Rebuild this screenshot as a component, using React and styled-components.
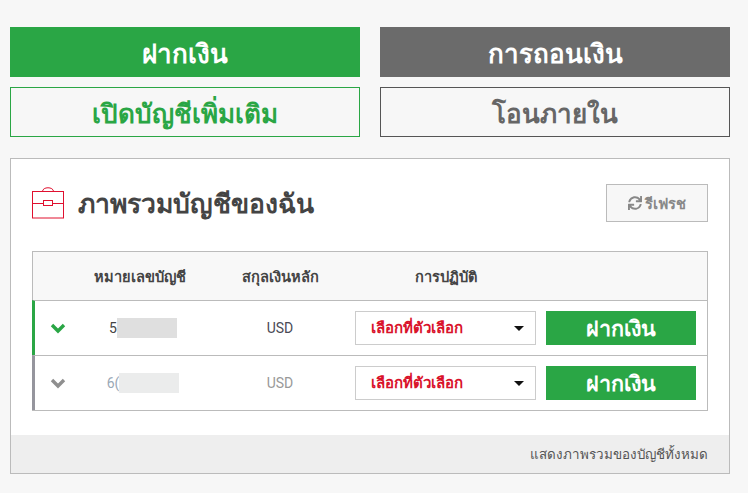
import React from 'react';
import styled, { createGlobalStyle } from 'styled-components';
import { FaSync } from 'react-icons/fa';

const GlobalStyle = createGlobalStyle`
  html, body { margin: 0; padding: 0; background: #f7f7f7; }
  * { box-sizing: border-box; }
  body { font-family: Roboto, "Noto Sans", "Liberation Sans", sans-serif; color: #444; }
`;

const Page = styled.div`
  width: 748px;
  height: 493px;
  padding: 27px 18px 0 10px;
  overflow: hidden;
`;

const ActionGrid = styled.div`
  display: grid;
  grid-template-columns: 350px 350px;
  column-gap: 20px;
  row-gap: 10px;
`;

const BigButton = styled.div`
  height: 50px;
  padding-top: 2px;
  display: flex;
  align-items: center;
  justify-content: center;
  font-size: 26px;
  font-weight: 700;
  color: ${p => p.$color};
  background: ${p => p.$bg || 'transparent'};
  border: 1px solid ${p => p.$border || p.$bg};
`;

const Panel = styled.div`
  margin-top: 21px;
  width: 720px;
  height: 316px;
  background: #fff;
  border: 1px solid #bbb;
  display: flex;
  flex-direction: column;
`;

const PanelBody = styled.div`
  flex: 1;
  padding: 25px 21px 0 21px;
`;

const PanelHead = styled.div`
  display: flex;
  align-items: center;
  height: 38px;
`;

const PanelTitle = styled.div`
  margin-left: 14px;
  padding-top: 2px;
  font-size: 26.5px;
  font-weight: 700;
  color: #444;
`;

const Refresh = styled.div`
  margin-left: auto;
  width: 102px;
  height: 38px;
  display: flex;
  align-items: center;
  justify-content: center;
  gap: 3px;
  background: #f7f7f7;
  border: 1px solid #bbb;
  color: #888;
  font-size: 14.7px;
  font-weight: 700;
`;

const Table = styled.div`
  margin-top: 29px;
  border: 1px solid #bbb;
`;

const HeadRow = styled.div`
  height: 48px;
  display: flex;
  align-items: center;
  background: #f8f8f8;
  font-size: 14.6px;
  font-weight: 700;
  color: #444;
`;

const Row = styled.div`
  height: 55px;
  display: flex;
  align-items: center;
  border-top: 1px solid #bbb;
  border-left: 3px solid ${p => p.$accent};
  margin-left: -1px;
  font-size: 14px;
  color: ${p => p.$muted ? '#999' : '#4a4a55'};
`;

const ChevronCell = styled.div`
  width: ${p => p.$head ? '48px' : '46px'};
  display: flex;
  justify-content: center;
`;

const AccountCell = styled.div`
  width: 124px;
  display: flex;
  align-items: center;
  justify-content: center;
  padding-right: ${p => p.$head ? '6px' : '0'};
`;

const AccountPrefix = styled.span`
  color: ${p => p.$muted ? '#9aa8b6' : '#444'};
`;

const Masked = styled.span`
  display: inline-block;
  width: 60px;
  height: 20px;
  background: ${p => p.$muted ? '#ebecec' : '#dfdfdf'};
`;

const CurrencyCell = styled.div`
  width: 150px;
  text-align: center;
`;

const ActionCell = styled.div`
  width: 181px;
  text-align: center;
`;

const Select = styled.div`
  width: 181px;
  height: 34px;
  display: flex;
  align-items: center;
  justify-content: space-between;
  padding: 0 11px 0 15px;
  border: 1px solid #ccc;
  background: #fff;
  color: #d9122b;
  font-size: 15px;
  font-weight: 700;
`;

const Caret = styled.span`
  width: 0;
  height: 0;
  border-left: 5px solid transparent;
  border-right: 5px solid transparent;
  border-top: 5px solid #111;
`;

const RowDeposit = styled.div`
  width: 150px;
  height: 34px;
  margin-left: 10px;
  display: flex;
  align-items: center;
  justify-content: center;
  background: #2aa645;
  color: #fff;
  font-size: 21.5px;
  font-weight: 700;
`;

const PanelFoot = styled.div`
  height: 38px;
  background: #eee;
  display: flex;
  align-items: center;
  justify-content: flex-end;
  padding-right: 21px;
  font-size: 13.4px;
  color: #555;
`;

const Chevron = ({ color }) => (
  <svg width="16" height="12" viewBox="0 0 16 12">
    <path d="M2 3 L8 9 L14 3" fill="none" stroke={color} strokeWidth="3.4" />
  </svg>
);

const Briefcase = () => (
  <svg width="32" height="32" viewBox="0 0 32 32" fill="none" stroke="#e0102f" strokeWidth="1">
    <rect x="0.5" y="4.5" width="31" height="26.5" />
    <path d="M10.5 4.5 C10.5 -0.5 21.5 -0.5 21.5 4.5" />
    <path d="M0.5 16.5 H11 M21 16.5 H31.5" />
    <rect x="11.5" y="13.5" width="9" height="5" />
  </svg>
);

const accounts = [
  { id: '5', accent: '#2aa645', chevron: '#2aa645' },
  { id: '6(', accent: '#95959d', chevron: '#8f8f8f', muted: true },
];

export default function App() {
  return (
    <Page>
      <GlobalStyle />
      <ActionGrid>
        <BigButton $bg="#2aa645" $color="#fff">ฝากเงิน</BigButton>
        <BigButton $bg="#6b6b6b" $color="#fff">การถอนเงิน</BigButton>
        <BigButton $border="#2aa645" $color="#2aa645">เปิดบัญชีเพิ่มเติม</BigButton>
        <BigButton $border="#555" $color="#666">โอนภายใน</BigButton>
      </ActionGrid>
      <Panel>
        <PanelBody>
          <PanelHead>
            <Briefcase />
            <PanelTitle>ภาพรวมบัญชีของฉัน</PanelTitle>
            <Refresh><FaSync size={14} color="#888" />รีเฟรช</Refresh>
          </PanelHead>
          <Table>
            <HeadRow>
              <ChevronCell $head />
              <AccountCell $head>หมายเลขบัญชี</AccountCell>
              <CurrencyCell>สกุลเงินหลัก</CurrencyCell>
              <ActionCell>การปฏิบัติ</ActionCell>
            </HeadRow>
            {accounts.map(a => (
              <Row key={a.id} $accent={a.accent} $muted={a.muted}>
                <ChevronCell><Chevron color={a.chevron} /></ChevronCell>
                <AccountCell>
                  <AccountPrefix $muted={a.muted}>{a.id}</AccountPrefix>
                  <Masked $muted={a.muted} />
                </AccountCell>
                <CurrencyCell>USD</CurrencyCell>
                <Select>เลือกที่ตัวเลือก<Caret /></Select>
                <RowDeposit>ฝากเงิน</RowDeposit>
              </Row>
            ))}
          </Table>
        </PanelBody>
        <PanelFoot>แสดงภาพรวมของบัญชีทั้งหมด</PanelFoot>
      </Panel>
    </Page>
  );
}
